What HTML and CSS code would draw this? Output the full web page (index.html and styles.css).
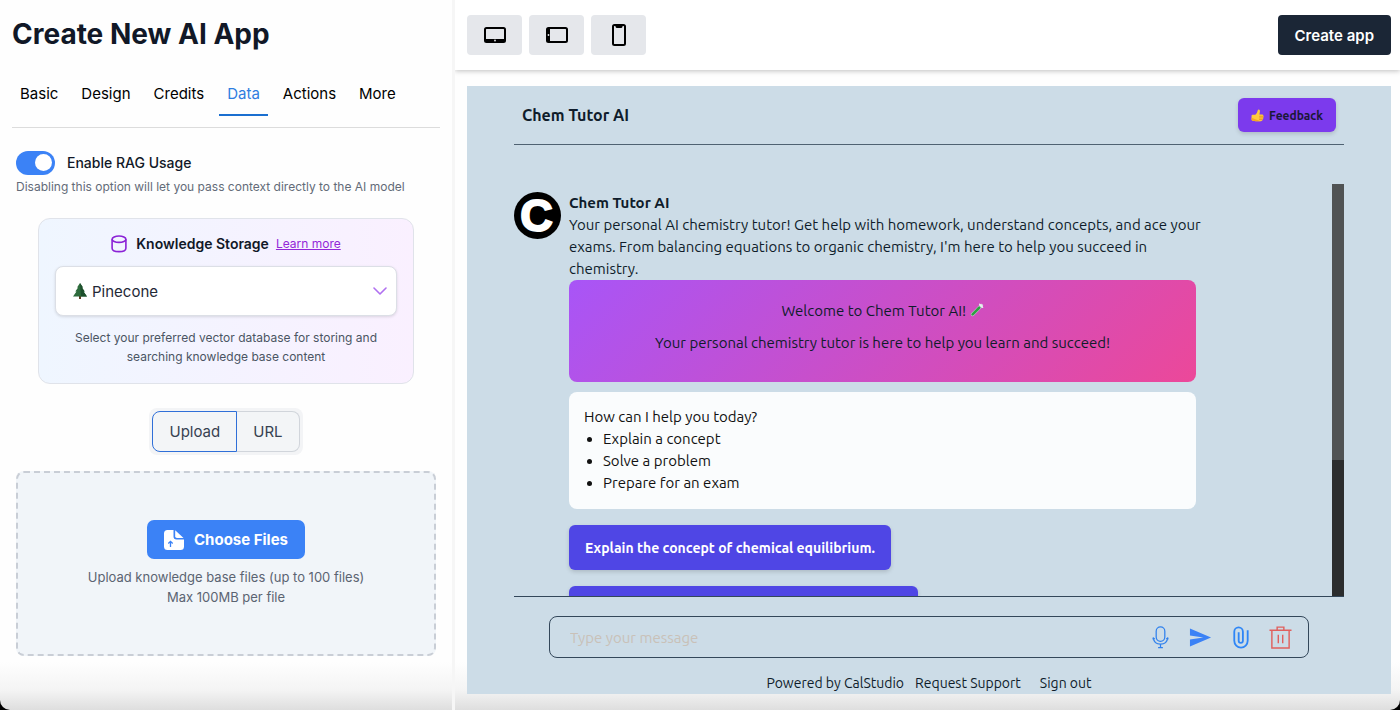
FILE: index.html
```html
<!DOCTYPE html>
<html lang="en">
<head>
    <meta charset="UTF-8">
    <meta name="viewport" content="width=device-width, initial-scale=1.0">
    <title>Create New AI App</title>
    <link rel="stylesheet" href="styles.css">
</head>
<body>
    <div class="app">
        <aside class="sidebar">
            <h1>Create New AI App</h1>
            <nav class="tabs">
                <a href="#basic">Basic</a>
                <a href="#design">Design</a>
                <a href="#credits">Credits</a>
                <a href="#data" class="active">Data</a>
                <a href="#actions">Actions</a>
                <a href="#more">More</a>
            </nav>

            <form class="data-form">
                <div class="toggle-row">
                    <input type="checkbox" class="toggle" id="enableRag" checked>
                    <label for="enableRag">Enable RAG Usage</label>
                </div>
                <p class="toggle-help">Disabling this option will let you pass context directly to the AI model</p>

                <section class="storage-card">
                    <div class="storage-title">
                        <svg class="icon-db" viewBox="0 0 16 18" fill="none" stroke="#8b22d6" stroke-width="1.6">
                            <ellipse cx="8" cy="4.2" rx="6.9" ry="3.2"/>
                            <path d="M1.1 4.2v9c0 2.2 2.2 3.4 6.9 3.4s6.900-1.200 6.900-3.400v-9"/>
                        </svg>
                        <label for="storage">Knowledge Storage</label>
                        <a href="#learn">Learn more</a>
                    </div>
                    <div class="select-wrap">
                        <svg class="icon-tree" viewBox="0 0 14 16">
                            <path d="M6 13h2v3H6z" fill="#5d3a1f"/>
                            <path d="M7 0l3 4.500H8.900l2.800 4H10.500L14 13.500H0L3.500 8.500H2.300l2.800-4H4z" fill="#2d6b3c"/>
                            <path d="M7 0l3 4.500H8.900l2.800 4H10.500L14 13.500H8z" fill="#1d4f2c"/>
                        </svg>
                        <select id="storage" name="storage">
                            <option>Pinecone</option>
                        </select>
                        <svg class="icon-chevron" viewBox="0 0 14 8" fill="none" stroke="#b070f0" stroke-width="1.6" stroke-linecap="round" stroke-linejoin="round">
                            <path d="M1 1l6 6 6-6"/>
                        </svg>
                    </div>
                    <p>Select your preferred vector database for storing and searching knowledge base content</p>
                </section>

                <div class="segmented">
                    <button type="button" class="selected">Upload</button>
                    <button type="button">URL</button>
                </div>

                <section class="dropzone">
                    <button type="button" class="choose">
                        <svg viewBox="0 0 20 20">
                            <path d="M3.500 0H9.500V6.500Q9.500 9.500 12.500 9.500H20V16.500Q20 20 16.500 20H3.500Q0 20 0 16.500V3.500Q0 0 3.500 0z" fill="#fff"/>
                            <path d="M11.200 0.300L19.500 8H13Q11.200 8 11.200 6.200z" fill="#fff"/>
                            <path d="M6.500 17v-5.500M4.300 13.500l2.200-2.200 2.200 2.200" fill="none" stroke="#3b82f6" stroke-width="1.300"/>
                        </svg>
                        Choose Files
                    </button>
                    <p>Upload knowledge base files (up to 100 files)</p>
                    <p>Max 100MB per file</p>
                </section>
            </form>
        </aside>

        <main class="main">
            <header class="topbar">
                <button type="button" class="device" aria-label="Desktop">
                    <svg viewBox="0 0 24 24">
                        <rect x="2" y="5" width="20" height="14" rx="1.500" fill="none" stroke="#000" stroke-width="2"/>
                        <path d="M2 16h20v3H2z"/>
                        <circle cx="12" cy="17.500" r="0.900" fill="#e5e7eb"/>
                    </svg>
                </button>
                <button type="button" class="device" aria-label="Tablet">
                    <svg viewBox="0 0 24 24">
                        <rect x="2" y="5" width="20" height="14" rx="1.500" fill="none" stroke="#000" stroke-width="2"/>
                        <path d="M2 5h3v14H2z"/>
                        <circle cx="3.500" cy="12" r="0.900" fill="#e5e7eb"/>
                    </svg>
                </button>
                <button type="button" class="device" aria-label="Phone">
                    <svg viewBox="0 0 24 24">
                        <rect x="6" y="2" width="12" height="20" rx="1.500" fill="none" stroke="#000" stroke-width="2"/>
                        <path d="M8.500 2h7v2l-1 1h-5l-1-1z"/>
                    </svg>
                </button>
                <button type="button" class="create">Create app</button>
            </header>

            <section class="preview">
                <header class="preview-head">
                    <h2>Chem Tutor AI</h2>
                    <button type="button" class="feedback">
                        <svg viewBox="0 0 24 24">
                            <path d="M1 12.500Q1 10.500 3 10.500H8Q12 7 12.500 2.500Q13 0.500 14.800 1Q17.500 2 16 8L15.500 10H21Q23.500 10.500 22.800 12.800Q24 14 22.600 16Q23.200 18 21.600 19Q21.800 22 18.500 22.500H9Q6 22 3 21.500Q1 21 1 19z" fill="#ffc93c"/>
                            <path d="M15 13.500H22.500M15 16.500H22.300M15 19.400H21.300" stroke="#e08a1e" stroke-width="1.300" fill="none"/>
                            <path d="M1 16v3Q1 21 3 21.500L9 22.500H18L8 19z" fill="#f5a623"/>
                        </svg>
                        Feedback
                    </button>
                </header>

                <div class="chat">
                    <div class="messages">
                        <svg class="avatar" viewBox="0 0 48 48">
                            <circle cx="24" cy="24" r="24"/>
                            <text x="23" y="40" text-anchor="middle">C</text>
                        </svg>
                        <div class="message">
                            <h3>Chem Tutor AI</h3>
                            <p class="intro">Your personal AI chemistry tutor! Get help with homework, understand concepts, and ace your exams. From balancing equations to organic chemistry, I'm here to help you succeed in chemistry.</p>
                            <div class="banner">
                                <p>Welcome to Chem Tutor AI!
                                    <svg viewBox="0 0 16 16">
                                        <path d="M3 13L13 3" stroke="#d5dde0" stroke-width="4" stroke-linecap="round"/>
                                        <path d="M3 13L10.500 5.500" stroke="#2f9e44" stroke-width="3.200" stroke-linecap="round"/>
                                        <path d="M11 1.500L14.500 5" stroke="#eef2f3" stroke-width="1.500" stroke-linecap="round"/>
                                    </svg>
                                </p>
                                <p>Your personal chemistry tutor is here to help you learn and succeed!</p>
                            </div>
                            <div class="help-card">
                                <p>How can I help you today?</p>
                                <ul>
                                    <li>Explain a concept</li>
                                    <li>Solve a problem</li>
                                    <li>Prepare for an exam</li>
                                </ul>
                            </div>
                            <button type="button" class="prompt">Explain the concept of chemical equilibrium.</button>
                            <button type="button" class="prompt prompt-next" aria-label="Next prompt"></button>
                        </div>
                    </div>
                    <div class="scrollbar"><div class="thumb"></div></div>
                </div>

                <form class="composer">
                    <input type="text" placeholder="Type your message" aria-label="Type your message">
                    <button type="button" aria-label="Record">
                        <svg viewBox="0 0 24 24" fill="none" stroke="#2f80ed" stroke-width="1.300">
                            <rect x="7.500" y="1" width="9" height="15" rx="4.500"/>
                            <path d="M4.500 12.500C5 16.500 8 19 12 19s7-2.500 7.500-6.500M4 14l0.500-1.500 1.500 1M20 14l-0.500-1.500-1.500 1M12 19v3.500M9.500 22.500h5"/>
                        </svg>
                    </button>
                    <button type="button" aria-label="Send">
                        <svg viewBox="0 0 24 24" fill="#3b82f6">
                            <path d="M1 2.500L23 12 1 21.500V14.200L15 12 1 9.800z"/>
                        </svg>
                    </button>
                    <button type="button" aria-label="Attach">
                        <svg viewBox="0 0 24 24" fill="none" stroke="#2f86f6" stroke-width="1.900">
                            <path d="M19.500 4.500V15.500a7 7 0 0 1-14 0V6a4.500 4.500 0 0 1 9 0V15.500a2.200 2.200 0 0 1-4.400 0V6.500"/>
                        </svg>
                    </button>
                    <button type="button" aria-label="Delete">
                        <svg viewBox="0 0 24 24" fill="none" stroke="#e0605e" stroke-width="1.500">
                            <path d="M0.500 4.500h23M3 4.500V23h18V4.500M8.500 4.500V1.200h7v3.300M9.700 9v9M14.300 9v9"/>
                        </svg>
                    </button>
                </form>
                <footer class="links">
                    <a href="#powered">Powered by CalStudio</a>
                    <a href="#support">Request Support</a>
                    <a href="#signout" class="sign-out">Sign out</a>
                </footer>
            </section>
        </main>
    </div>
</body>
</html>
```
FILE: styles.css
```css
* {
    box-sizing: border-box;
}

body {
    margin: 0;
    background-color: #000;
    font-family: Inter, sans-serif;
    color: #111827;
}

h1, h2, h3, p, ul {
    margin: 0;
}

button, input, select {
    font-family: inherit;
}

button {
    border: none;
    cursor: pointer;
}

.app {
    display: grid;
    grid-template-columns: 455px 1fr;
    min-height: 100vh;
    border-radius: 0 0 10px 10px;
    overflow: hidden;
    background: linear-gradient(to top, #dedede, #f4f4f4 20px, #fefefe 48px);
}

/* sidebar */
.sidebar {
    padding: 14px 12px;
    border-right: 3px solid #f6f6f6;
}

h1 {
    font-size: 28px;
    line-height: 40px;
    font-weight: 700;
}

.tabs {
    display: flex;
    gap: 7px;
    margin-top: 20px;
    padding-bottom: 11px;
    border-bottom: 1px solid #dcdcdc;
}

.tabs a {
    padding: 8px;
    font-size: 15px;
    line-height: 24px;
    color: #000;
    text-decoration: none;
    border-bottom: 2px solid transparent;
}

.tabs .active {
    color: #2f7de0;
    border-color: #1a6fd0;
}

.data-form {
    padding: 23px 4px 0;
}

.toggle-row {
    display: flex;
    align-items: center;
    gap: 12px;
    font-size: 14px;
    font-weight: 500;
    line-height: 24px;
}

.toggle {
    appearance: none;
    display: flex;
    width: 39px;
    height: 24px;
    margin: 0;
    padding: 3px;
    border-radius: 12px;
    background-color: #3b82f6;
}

.toggle::before {
    content: "";
    width: 17px;
    height: 17px;
    margin-left: auto;
    border-radius: 50%;
    background-color: #fff;
}

.toggle-help {
    margin-top: 3px;
    font-size: 12px;
    line-height: 18px;
    color: #636b78;
}

.storage-card {
    margin: 22px 22px 24px;
    padding: 15px 16px 17px;
    border: 1px solid #e0e3ea;
    border-radius: 12px;
    background: linear-gradient(to right, #eff6ff, #faf0ff);
}

.storage-title {
    display: flex;
    justify-content: center;
    align-items: center;
    gap: 7px;
    line-height: 20px;
    font-size: 14px;
}

.storage-title label {
    font-weight: 600;
}

.storage-title a {
    font-size: 12px;
    color: #9427d8;
}

.icon-db {
    width: 16px;
    height: 18px;
    margin-right: 2px;
}

.select-wrap {
    position: relative;
    margin-top: 12px;
}

.select-wrap select {
    appearance: none;
    display: block;
    width: 100%;
    height: 50px;
    padding: 0 36px;
    border: 1px solid #dcdfe6;
    border-radius: 8px;
    background-color: #fff;
    font-size: 15px;
    color: #1f2937;
    box-shadow: 0 1px 3px rgba(0, 0, 0, 0.12);
}

.icon-tree {
    position: absolute;
    left: 18px;
    top: 17px;
    width: 14px;
    height: 16px;
}

.icon-chevron {
    position: absolute;
    right: 10px;
    top: 21px;
    width: 14px;
    height: 8px;
}

.storage-card p {
    margin-top: 12px;
    font-size: 12px;
    line-height: 19px;
    text-align: center;
    color: #4b5563;
}

.segmented {
    display: flex;
    width: fit-content;
    margin: 0 auto;
    padding: 3px;
    border-radius: 8px;
    background-color: #f3f4f6;
}

.segmented button {
    padding: 0 16px;
    border: 1px solid #d1d5db;
    border-left: none;
    border-radius: 0 8px 8px 0;
    background-color: #f3f5f7;
    font-size: 15px;
    line-height: 39px;
    color: #374151;
}

.segmented .selected {
    border: 1px solid #2f6fd8;
    border-radius: 8px 0 0 8px;
}

.dropzone {
    margin-top: 16px;
    padding: 47px 16px;
    border: 2px dashed #c9ced6;
    border-radius: 8px;
    background-color: #f1f5f9;
    text-align: center;
}

.dropzone p {
    font-size: 13px;
    line-height: 20px;
    color: #5b6472;
}

.choose {
    display: inline-flex;
    align-items: center;
    gap: 10px;
    height: 39px;
    margin-bottom: 8px;
    padding: 0 17px;
    border-radius: 7px;
    background-color: #3b82f6;
    color: #fff;
    font-size: 15px;
    font-weight: 700;
}

.choose svg {
    width: 20px;
    height: 20px;
}

/* right side */
.main {
    display: flex;
    flex-direction: column;
}

.topbar {
    display: flex;
    gap: 7px;
    padding: 15px 9px 15px 12px;
    background-color: #fff;
    box-shadow: 0 1px 5px rgba(0, 0, 0, 0.25);
    clip-path: inset(0 0 -12px 0);
}

.device {
    display: grid;
    place-items: center;
    width: 55px;
    height: 40px;
    padding: 0;
    border-radius: 4px;
    background-color: #e5e7eb;
}

.device svg {
    width: 24px;
    height: 24px;
}

.create {
    height: 40px;
    margin-left: auto;
    padding: 0 17px;
    border-radius: 4px;
    background-color: #1b2636;
    color: #fff;
    font-size: 15px;
    font-weight: 600;
}

.preview {
    flex: 1;
    display: flex;
    flex-direction: column;
    margin: 16px 9px 16px 12px;
    padding: 0 47px;
    background-color: #ccdce7;
    color: #0f1c2b;
    font-family: Ubuntu, "Noto Sans", sans-serif;
    font-size: 15px;
    line-height: 22px;
}

.preview-head {
    display: flex;
    justify-content: space-between;
    align-items: center;
    height: 59px;
    padding: 0 8px;
    border-bottom: 1px solid #4f6272;
}

.preview-head h2 {
    font-size: 16px;
    font-weight: 700;
}

.feedback {
    display: flex;
    align-items: center;
    gap: 5px;
    height: 34px;
    padding: 0 13px;
    border-radius: 6px;
    background-color: #7c3aed;
    color: #1b1838;
    font-size: 12px;
    font-weight: 700;
    box-shadow: 0 2px 4px rgba(0, 0, 0, 0.15);
}

.feedback svg {
    width: 13px;
    height: 13px;
}

.chat {
    flex: 1 1 0;
    display: flex;
    min-height: 0;
    margin-top: 39px;
    overflow: hidden;
    border-bottom: 1px solid #33475a;
}

.messages {
    flex: 1;
    display: flex;
    align-items: flex-start;
    gap: 8px;
    height: 0;
    padding: 8px 136px 0 0;
}

.avatar {
    flex: none;
    width: 47px;
    height: 47px;
    overflow: visible;
}

.avatar text {
    font-family: "Liberation Sans", sans-serif;
    font-size: 46px;
    font-weight: 700;
    fill: #fff;
    stroke: #fff;
    stroke-width: 2;
}

.message {
    flex: 1;
}

.message h3 {
    font-size: 15px;
    font-weight: 700;
}

/* the intro runs a little wider than the cards below it */
.intro {
    margin-right: -12px;
}

.banner {
    padding: 20px 16px 28px;
    border-radius: 8px;
    background: linear-gradient(135deg, #a855f7, #ec4899);
    text-align: center;
}

.banner p + p {
    margin-top: 10px;
}

.banner svg {
    width: 14px;
    height: 14px;
    vertical-align: -1px;
}

.help-card {
    margin-top: 10px;
    padding: 14px 15px 15px;
    border-radius: 8px;
    background-color: #fafcfd;
    color: #111;
}

.help-card ul {
    padding-left: 19px;
}

.prompt {
    display: block;
    min-height: 45px;
    margin-top: 16px;
    padding: 0 16px;
    border-radius: 6px;
    background-color: #4f46e5;
    color: #fff;
    font-size: 14px;
    font-weight: 700;
    box-shadow: 0 2px 4px rgba(0, 0, 0, 0.15);
}

.prompt-next {
    min-width: 349px;
}

.scrollbar {
    width: 12px;
    background-color: #2b2d2e;
}

.thumb {
    height: 67%;
    background-color: #505354;
}

.composer {
    display: flex;
    align-items: center;
    gap: 17px;
    height: 42px;
    margin: 19px 35px 14px;
    padding: 0 16px 0 20px;
    border: 1px solid #33475a;
    border-radius: 8px;
}

.composer input {
    flex: 1;
    min-width: 0;
    padding: 0;
    border: none;
    outline: none;
    background: none;
    font-size: 15px;
    color: #0f1c2b;
}

.composer input::placeholder {
    color: #c9c1b8;
}

.composer button {
    display: grid;
    padding: 0;
    background: none;
}

.composer svg {
    width: 23px;
    height: 23px;
}

.links {
    display: flex;
    justify-content: center;
    gap: 11px;
    font-size: 14px;
}

.links a {
    color: #0f1c2b;
    text-decoration: none;
}

.links .sign-out {
    margin-left: 8px;
}
```
